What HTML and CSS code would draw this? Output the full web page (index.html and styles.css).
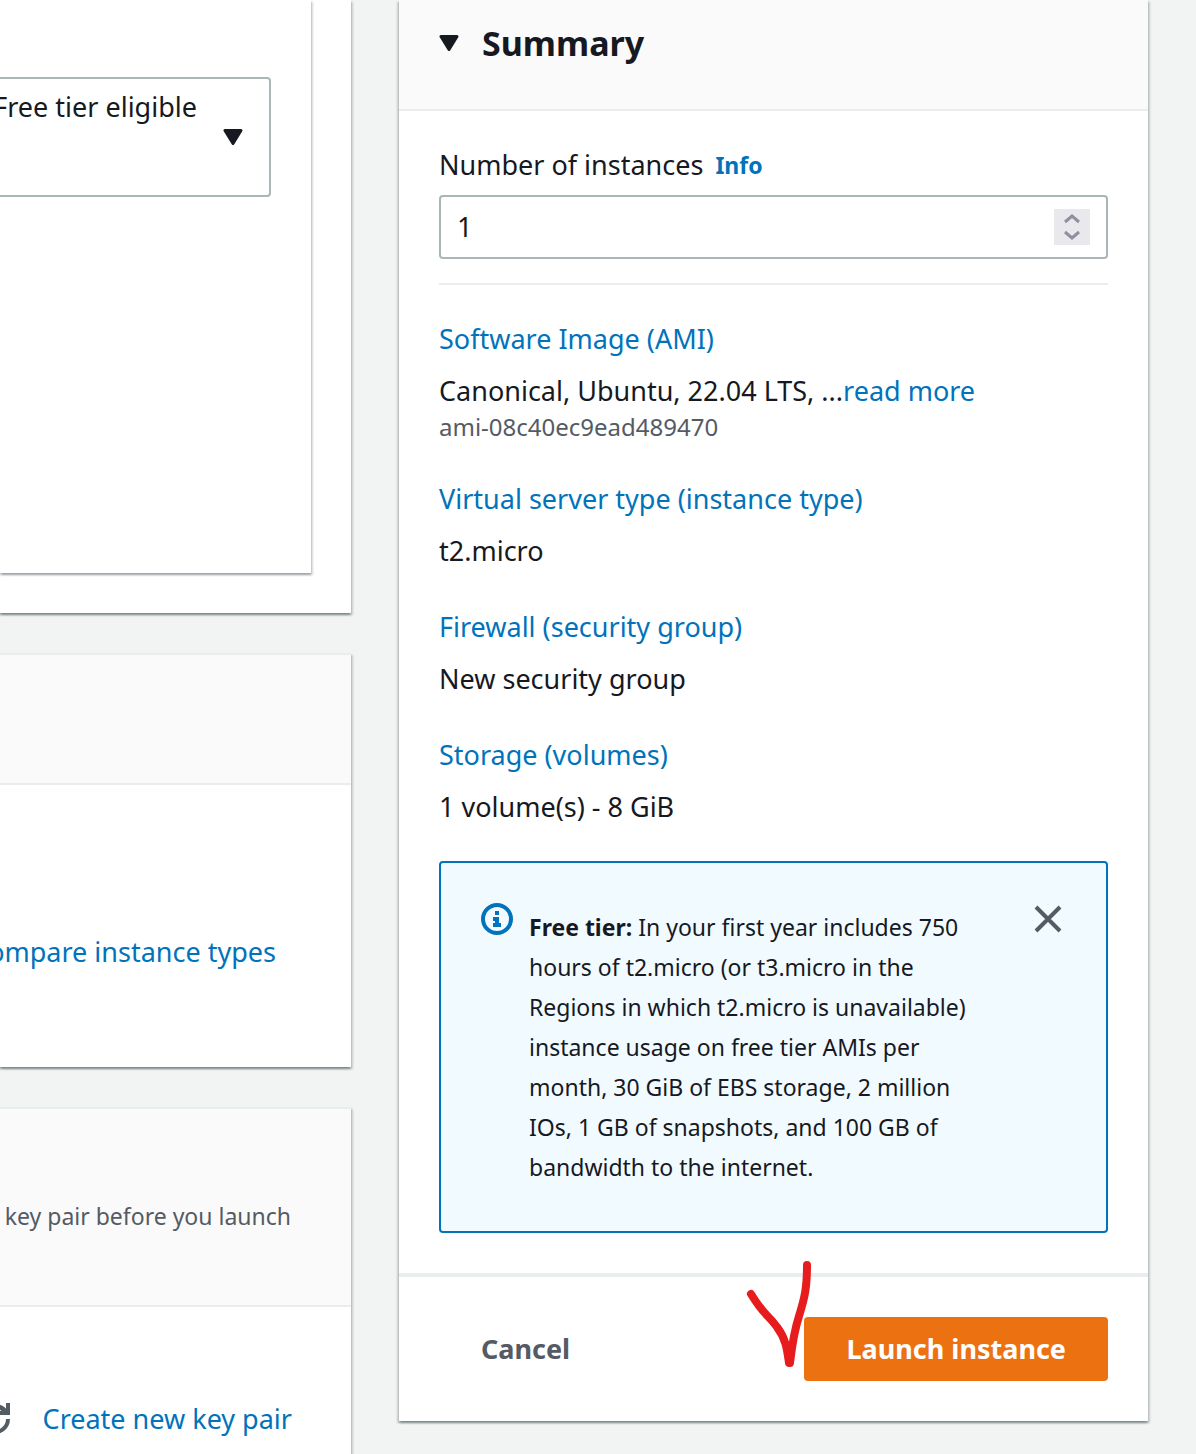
FILE: index.html
```html
<!DOCTYPE html>
<html lang="en">
<head>
<meta charset="utf-8">
<meta name="viewport" content="width=device-width, initial-scale=1">
<title>Launch an instance</title>
<link rel="stylesheet" href="styles.css">
</head>
<body>
<main class="layout">
  <div class="settings">
    <section class="card card-ami">
      <div class="card-inner">
        <button class="ami-select" type="button">
          <span class="ami-label">Free tier eligible</span>
          <svg class="caret" viewBox="0 0 20 16" aria-hidden="true"><path d="M2 1.500H18L10 14.500Z"/></svg>
        </button>
      </div>
    </section>
    <section class="card ruled">
      <div class="card-head type-head"></div>
      <div class="card-body type-body">
        <a class="link" href="#compare">Compare instance types</a>
      </div>
    </section>
    <section class="card ruled">
      <div class="card-head key-head">
        <p class="hint">key pair before you launch</p>
      </div>
      <div class="card-body key-body">
        <button class="icon-button" type="button" aria-label="Refresh key pairs">
          <svg class="refresh" viewBox="0 0 32 32" aria-hidden="true"><path d="M29 4V14H19M21 8L28 14M27 13A13 13 0 1 0 29 20"/></svg>
        </button>
        <a class="link" href="#keypair">Create new key pair</a>
      </div>
    </section>
  </div>

  <aside class="card summary">
    <header class="card-head summary-head">
      <svg class="caret" viewBox="0 0 20 16" aria-hidden="true"><path d="M2 1.500H18L10 14.500Z"/></svg>
      <h2 class="title">Summary</h2>
    </header>
    <div class="summary-body">
      <div class="label-row">
        <label for="count">Number of instances</label>
        <a class="info" href="#info">Info</a>
      </div>
      <div class="number-field">
        <input class="number" id="count" type="number" value="1" min="1">
        <svg class="spinner" viewBox="0 0 36 36" aria-hidden="true"><path d="M11 13L18 7L25 13M11 23L18 29L25 23"/></svg>
      </div>
      <dl class="details">
        <div class="detail">
          <dt><a class="link" href="#ami">Software Image (AMI)</a></dt>
          <dd>Canonical, Ubuntu, 22.04 LTS, ...<a class="link" href="#more">read more</a></dd>
          <dd class="sub">ami-08c40ec9ead489470</dd>
        </div>
        <div class="detail">
          <dt><a class="link" href="#type">Virtual server type (instance type)</a></dt>
          <dd>t2.micro</dd>
        </div>
        <div class="detail">
          <dt><a class="link" href="#firewall">Firewall (security group)</a></dt>
          <dd>New security group</dd>
        </div>
        <div class="detail">
          <dt><a class="link" href="#storage">Storage (volumes)</a></dt>
          <dd>1 volume(s) - 8 GiB</dd>
        </div>
      </dl>
      <div class="alert">
        <svg class="alert-icon" viewBox="0 0 32 32" aria-hidden="true">
          <circle cx="16" cy="16" r="14"/>
          <path d="M14 8h4v4h-4zM12 14h6v6h2v4h-8v-4h2v-2h-2z"/>
        </svg>
        <p class="alert-text"><strong>Free tier:</strong> In your first year includes 750 hours of t2.micro (or t3.micro in the Regions in which t2.micro is unavailable) instance usage on free tier AMIs per month, 30 GiB of EBS storage, 2 million IOs, 1 GB of snapshots, and 100 GB of bandwidth to the internet.</p>
        <button class="icon-button" type="button" aria-label="Dismiss">
          <svg class="close" viewBox="0 0 32 32" aria-hidden="true"><path d="M4 4L28 28M28 4L4 28"/></svg>
        </button>
      </div>
    </div>
    <footer class="actions">
      <button class="button cancel" type="button">Cancel</button>
      <div class="launch-wrap">
        <button class="button launch" type="button">Launch instance</button>
        <svg class="tick" viewBox="0 0 72 116" aria-hidden="true"><path d="M7 37C21 60 23 56 33 70C42 82 43 92 45 106H46C47 98 49 78 55 59C61 40 63 30 63 8"/></svg>
      </div>
    </footer>
  </aside>
</main>
</body>
</html>
```

FILE: styles.css
```css
* { box-sizing: border-box; }

body {
  margin: 0;
  background: #f2f3f3;
  color: #16191f;
  font-family: "Noto Sans", "Open Sans", sans-serif;
  font-size: 27px;
  line-height: 40px;
  overflow-x: hidden;
}

h2, p, dl, dd { margin: 0; }

button, input { font: inherit; color: inherit; }

.layout {
  display: grid;
  grid-template-columns: minmax(0, 351fr) minmax(0, 749fr);
  column-gap: 48px;
  align-items: start;
  height: 100vh;
  padding-right: 48px;
  overflow: hidden;
}

.settings {
  display: flex;
  flex-direction: column;
  gap: 40px;
}

.card {
  background: #fff;
  box-shadow: 0 2px 2px rgba(0, 28, 36, .3), 2px 2px 2px rgba(0, 28, 36, .15), -2px 2px 2px rgba(0, 28, 36, .15);
}

.ruled { border-top: 2px solid #eaeded; }

.card-head {
  background: #fafafa;
  border-bottom: 2px solid #eaeded;
}

.card-ami { padding: 0 40px 40px 0; }

.card-inner {
  min-height: 573px;
  padding: 77px 40px 0 0;
  box-shadow: 0 2px 2px rgba(0, 28, 36, .3), 2px 2px 2px rgba(0, 28, 36, .15);
}

.ami-select {
  display: flex;
  justify-content: flex-end;
  gap: 26px;
  width: 100%;
  height: 120px;
  padding: 8px 26px;
  background: #fff;
  border: 2px solid #aab7b8;
  border-left: 0;
  border-radius: 0 4px 4px 0;
}

.ami-label { white-space: nowrap; }

.caret {
  flex: none;
  width: 20px;
  height: 16px;
  fill: #16191f;
  stroke: #16191f;
  stroke-width: 3px;
  stroke-linejoin: round;
}

.ami-select .caret { align-self: center; }

.link { color: #0073bb; text-decoration: none; white-space: nowrap; }

.card-body { display: flex; justify-content: flex-end; }

.type-head { height: 130px; }

.type-body { min-height: 282px; padding: 147px 75px 0 0; }

.key-head { padding: 87px 60px 69px 0; }

.hint {
  display: flex;
  justify-content: flex-end;
  color: #545b64;
  font-size: 23px;
  white-space: nowrap;
}

.key-body { gap: 32px; padding: 92px 59px 60px 0; }

.icon-button {
  display: flex;
  flex: none;
  align-items: flex-start;
  padding: 0;
  background: none;
  border: 0;
}

.refresh, .close {
  width: 32px;
  height: 32px;
  overflow: visible;
  fill: none;
  stroke: #545b64;
  stroke-width: 4px;
}

.summary-head {
  display: flex;
  align-items: center;
  gap: 23px;
  padding: 21px 40px 44px;
}

.title { font-size: 34px; line-height: 44px; font-weight: 700; }

.summary-body { padding: 34px 40px 40px; }

.label-row { display: flex; gap: 12px; }

.info {
  color: #0073bb;
  font-size: 23px;
  font-weight: 700;
  text-decoration: none;
}

.number-field {
  display: flex;
  align-items: center;
  height: 64px;
  margin: 10px 0 24px;
  padding: 0 16px;
  border: 2px solid #aab7b8;
  border-radius: 4px;
}

.number {
  flex: 1;
  min-width: 0;
  padding: 0;
  background: none;
  border: 0;
  outline: 0;
  appearance: textfield;
}

.number::-webkit-inner-spin-button { appearance: none; margin: 0; }

.spinner {
  width: 36px;
  height: 36px;
  background: #e9e9ed;
  fill: none;
  stroke: #8f8f9d;
  stroke-width: 3px;
}

.details {
  display: flex;
  flex-direction: column;
  gap: 36px;
  padding: 34px 0;
  border-top: 2px solid #eaeded;
}

dt { margin-bottom: 12px; }

.sub { color: #545b64; font-size: 24px; line-height: 32px; }

.alert {
  display: flex;
  gap: 16px;
  padding: 40px 42px 40px 40px;
  background: #f1faff;
  border: 2px solid #0073bb;
  border-radius: 4px;
}

.alert-icon {
  flex: none;
  width: 32px;
  height: 32px;
  fill: #0073bb;
}

.alert-icon circle { fill: none; stroke: #0073bb; stroke-width: 4px; }

.alert-text {
  flex: 1;
  padding: 4px 32px 4px 0;
  font-size: 23px;
}

.actions {
  display: flex;
  align-items: center;
  justify-content: space-between;
  padding: 40px;
  border-top: 4px solid #eaeded;
}

.button {
  height: 64px;
  padding: 0 42px;
  background: none;
  border: 0;
  border-radius: 4px;
  font-weight: 700;
}

.cancel { color: #545b64; }

.launch { background: #ec7211; color: #fff; }

.launch-wrap { position: relative; }

.tick {
  position: absolute;
  left: -60px;
  top: -60px;
  width: 72px;
  height: 116px;
  fill: none;
  stroke: #e71d1d;
  stroke-width: 8px;
  stroke-linecap: round;
  stroke-linejoin: round;
  pointer-events: none;
}
```
